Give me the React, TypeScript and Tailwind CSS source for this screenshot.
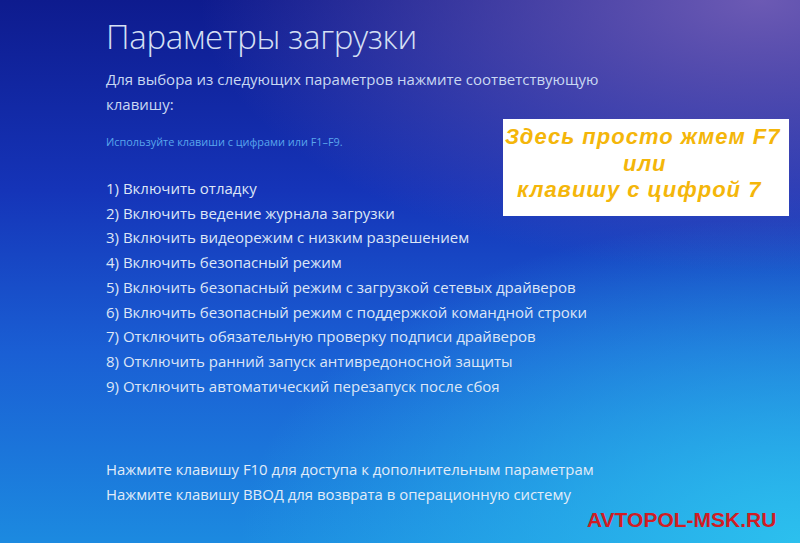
const items = [
  "1) Включить отладку",
  "2) Включить ведение журнала загрузки",
  "3) Включить видеорежим с низким разрешением",
  "4) Включить безопасный режим",
  "5) Включить безопасный режим с загрузкой сетевых драйверов",
  "6) Включить безопасный режим с поддержкой командной строки",
  "7) Отключить обязательную проверку подписи драйверов",
  "8) Отключить ранний запуск антивредоносной защиты",
  "9) Отключить автоматический перезапуск после сбоя",
]

export default function App() {
  return (
    <div className="relative h-[543px] w-[800px] overflow-hidden bg-[radial-gradient(ellipse_70%_50%_at_95%_0%,#6c5ab4_0%,rgba(108,90,180,0)_100%),radial-gradient(ellipse_70%_60%_at_100%_100%,#2cc0ee_0%,rgba(44,192,238,0)_100%),linear-gradient(180deg,#0e1b8e_0%,#1534b8_35%,#1a5fd4_65%,#1c8ae0_100%)] font-['Open_Sans',sans-serif] text-[#dde6f6]">
      <div className="flex flex-col pl-[106px] pt-[14px]">
        <h1 className="text-[33px] font-light leading-[46px] tracking-[-0.3px] text-[#d6e0f4]">
          Параметры загрузки
        </h1>
        <p className="mt-[7px] w-[520px] text-[15px] leading-[25px] text-[#c9d8f2]">
          Для выбора из следующих параметров нажмите соответствующую клавишу:
        </p>
        <p className="mt-[18px] text-[10.9px] leading-[14px] text-[#5aa6ec]">
          Используйте клавиши с цифрами или F1–F9.
        </p>
        <ul className="mt-[27px] flex flex-col">
          {items.map((t) => (
            <li key={t} className="text-[15px] leading-[24.7px]">
              {t}
            </li>
          ))}
        </ul>
        <div className="mt-[59px] flex flex-col text-[14.9px] leading-[25px] text-[#e2ecf8]">
          <p>Нажмите клавишу F10 для доступа к дополнительным параметрам</p>
          <p>Нажмите клавишу ВВОД для возврата в операционную систему</p>
        </div>
      </div>

      <div className="absolute left-[503px] top-[119px] flex h-[97px] w-[286px] flex-col bg-white pt-[5px] font-['Liberation_Sans',sans-serif] text-[22px] font-bold italic leading-[26.5px] tracking-[1px] text-[#f4b60a]">
        <span className="pl-[2px]">Здесь просто жмем F7</span>
        <span className="pl-[120px]">или</span>
        <span className="pl-[14px]">клавишу с цифрой 7</span>
      </div>

      <div className="absolute left-[587px] top-[507px] font-['Liberation_Sans',sans-serif] text-[21px] font-bold leading-[26px] text-[#d11c24]">
        AVTOPOL-MSK.RU
      </div>
    </div>
  )
}
